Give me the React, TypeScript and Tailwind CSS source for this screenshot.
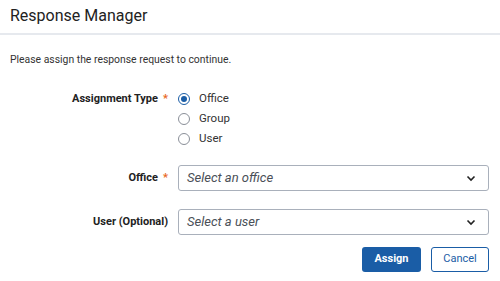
import React from "react";

const Req = () => <span className="ml-[5px] text-[#e8671c]">*</span>;

const Chevron = () => (
  <svg width="12" height="12" viewBox="0 0 12 12" fill="none">
    <path d="M2.5 4.5 6 8l3.5-3.5" stroke="#222" strokeWidth="1.6" />
  </svg>
);

const Radio: React.FC<{ label: string; checked?: boolean }> = ({ label, checked }) => (
  <label className="flex h-[20px] items-center gap-[9px]">
    <span
      className={`flex h-[12px] w-[12px] items-center justify-center rounded-full border ${
        checked ? "border-[#1a5da6]" : "border-[#8a8f98]"
      }`}
    >
      {checked && <span className="h-[6px] w-[6px] rounded-full bg-[#1a5da6]" />}
    </span>
    <span className="text-[11.5px] text-[#333]">{label}</span>
  </label>
);

const Select: React.FC<{ placeholder: string }> = ({ placeholder }) => (
  <div className="flex h-[26px] flex-1 items-center justify-between rounded-[3px] border border-[#a9b0bb] pl-[8px] pr-[11px]">
    <span className="text-[13px] italic text-[#4a4f57]">{placeholder}</span>
    <Chevron />
  </div>
);

export default function App() {
  return (
    <div
      className="h-[281px] w-[500px] bg-white text-[#222]"
      style={{ fontFamily: "Roboto, 'Liberation Sans', sans-serif" }}
    >
      {/* header */}
      <div className="border-b-2 border-[#e6e9ee] px-[10px] pb-[7px] pt-[5px]">
        <h1 className="text-[16px] leading-[21px] text-[#222]">Response Manager</h1>
      </div>

      <div className="px-[10px] pt-[18px]">
        <p className="text-[10.4px] leading-[14px] text-[#333]">
          Please assign the response request to continue.
        </p>

        <div className="mt-[22px] grid grid-cols-[158px_1fr] gap-x-[10px] pr-[1px]">
          <div className="flex h-[20px] items-center justify-end text-[11px] font-bold">
            Assignment Type
            <Req />
          </div>
          <div className="flex flex-col">
            <Radio label="Office" checked />
            <Radio label="Group" />
            <Radio label="User" />
          </div>

          <div className="mt-[16px] flex h-[26px] items-center justify-end text-[11px] font-bold">
            Office
            <Req />
          </div>
          <div className="mt-[16px] flex">
            <Select placeholder="Select an office" />
          </div>

          <div className="mt-[18px] flex h-[26px] items-center justify-end text-[11px] font-bold">
            User (Optional)
          </div>
          <div className="mt-[18px] flex">
            <Select placeholder="Select a user" />
          </div>
        </div>

        <div className="mt-[12px] flex justify-end gap-[10px] pr-[1px]">
          <button className="h-[25px] w-[59px] rounded-[3px] bg-[#1a5da6] text-[11px] font-bold text-white">
            Assign
          </button>
          <button className="h-[25px] w-[58px] rounded-[3px] border border-[#1a5da6] bg-white text-[11px] text-[#1a5da6]">
            Cancel
          </button>
        </div>
      </div>
    </div>
  );
}
